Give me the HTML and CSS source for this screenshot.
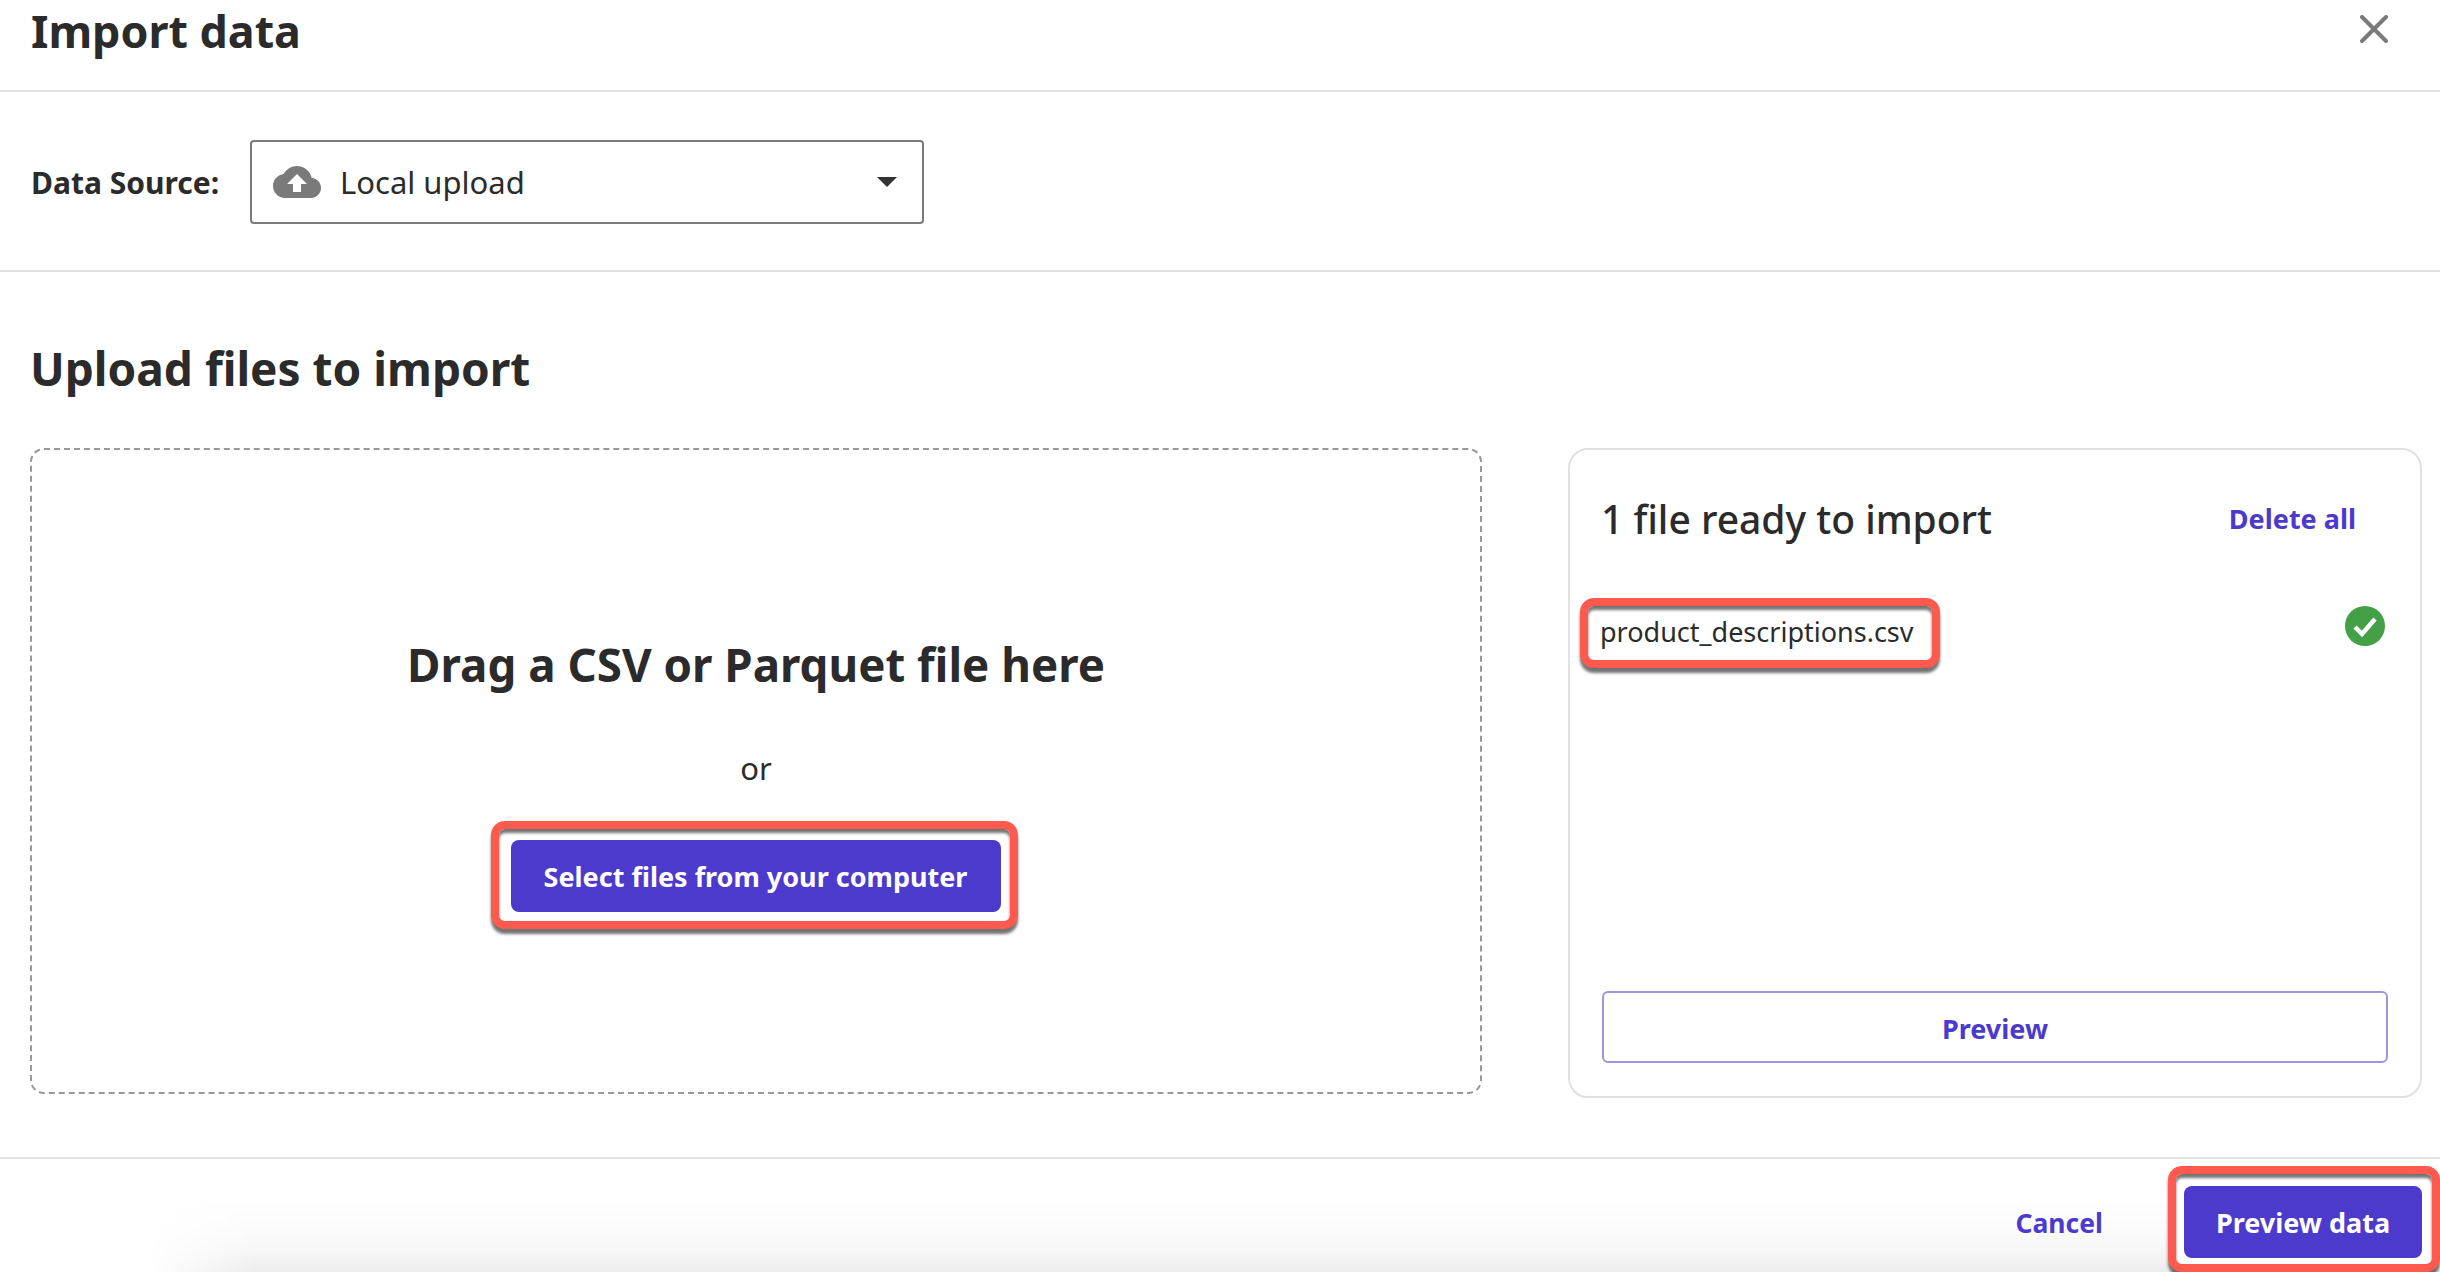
FILE: index.html
```html
<!DOCTYPE html>
<html lang="en">
<head>
    <meta charset="UTF-8">
    <title>Import data</title>
    <link rel="stylesheet" href="styles.css">
</head>
<body>
    <div class="bottom-glow"></div>
    <header class="modal-head">
        <h1>Import data</h1>
        <svg class="close-icon" width="28" height="28" viewBox="0 0 28 28">
            <path d="M2 2 L26 26 M26 2 L2 26" stroke="#7a7a7a" stroke-width="4" stroke-linecap="round" fill="none" />
        </svg>
    </header>

    <section class="source-row">
        <span class="source-label">Data Source:</span>
        <div class="select-box">
            <!-- cloud -->
            <svg class="cloud-icon" width="48" height="32" viewBox="0 4 24 16">
                <path fill="#7a7a7a" d="M19.35 10.04C18.67 6.59 15.64 4 12 4 9.11 4 6.6 5.64 5.35 8.04 2.34 8.36 0 10.91 0 14c0 3.31 2.69 6 6 6h13c2.76 0 5-2.24 5-5 0-2.64-2.05-4.78-4.65-4.96zM14 13v4h-4v-4H7l5-5 5 5h-3z" />
            </svg>
            <span class="select-value">Local upload</span>
            <span class="caret"></span>
        </div>
    </section>

    <main class="upload">
        <h2>Upload files to import</h2>
        <div class="columns">
            <div class="dropzone">
                <div class="drop-title">Drag a CSV or Parquet file here</div>
                <div class="drop-or">or</div>
                <div class="callout callout-select">
                    <button class="btn-primary btn-select">Select files from your computer</button>
                </div>
            </div>
            <div class="file-card">
                <div class="card-head">
                    <span class="card-title">1 file ready to import</span>
                    <a class="link">Delete all</a>
                </div>
                <div class="file-row">
                    <div class="callout callout-file">product_descriptions.csv</div>
                    <svg class="check-icon" width="40" height="40" viewBox="0 0 40 40">
                        <circle cx="20" cy="20" r="20" fill="#43a047" />
                        <path d="M10 21 L17 28 L30 13" stroke="#fff" stroke-width="4.5" fill="none" />
                    </svg>
                </div>
                <button class="btn-outline">Preview</button>
            </div>
        </div>
    </main>

    <footer class="modal-foot">
        <a class="link link-cancel">Cancel</a>
        <div class="callout callout-preview">
            <button class="btn-primary btn-preview">Preview data</button>
        </div>
    </footer>
</body>
</html>
```

FILE: styles.css
```css
* {
    box-sizing: border-box;
}
html, body {
    margin: 0;
    height: 1272px;
    overflow: hidden;
}
body {
    position: relative;
    display: flex;
    flex-direction: column;
    font-family: "Noto Sans", sans-serif;
    color: #2b2b2b;
    background-color: #fff;
}

/* soft shadow rising from the bottom edge of the window */
.bottom-glow {
    position: absolute;
    left: 147px;
    right: 0;
    bottom: 0;
    height: 75px;
    background: linear-gradient(to bottom, rgba(0, 0, 0, 0), rgba(0, 0, 0, 0.01) 40%, rgba(0, 0, 0, 0.03) 70%, rgba(0, 0, 0, 0.07));
    -webkit-mask-image: linear-gradient(to right, transparent, #000 108px);
    mask-image: linear-gradient(to right, transparent, #000 108px);
}

.modal-head {
    flex: none;
    height: 92px;
    padding: 0 52px 0 31px;
    display: flex;
    justify-content: space-between;
    border-bottom: 2px solid #e1e1e1;
}
.modal-head h1 {
    margin: 0;
    font-size: 44.8px;
    font-weight: 700;
    line-height: 62px;
}
.close-icon {
    margin-top: 15px;
}

.source-row {
    flex: none;
    height: 180px;
    padding: 2px 0 0 31px;
    display: flex;
    align-items: center;
    border-bottom: 2px solid #e1e1e1;
}
.source-label {
    width: 219px;
    font-size: 30px;
    font-weight: 700;
}
.select-box {
    width: 674px;
    height: 84px;
    padding: 0 24px 0 21px;
    display: flex;
    align-items: center;
    border: 2px solid #7a7a7a;
    border-radius: 4px;
}
.select-value {
    flex: 1;
    margin-left: 19px;
    font-size: 31px;
}
.caret {
    margin-right: 1px;
    border-left: 10px solid transparent;
    border-right: 10px solid transparent;
    border-top: 10px solid #333;
}

.upload {
    flex: 1;
    padding: 0 18px 0 30px;
}
.upload h2 {
    margin: 0;
    height: 176px;
    padding-top: 64px;
    font-size: 46px;
    font-weight: 700;
    line-height: 64px;
}
.columns {
    display: flex;
    justify-content: space-between;
    align-items: flex-start;
}
.dropzone {
    width: 1452px;
    height: 646px;
    padding-top: 184px;
    display: flex;
    flex-direction: column;
    align-items: center;
    border: 2px dashed #999;
    border-radius: 14px;
}
.drop-title {
    font-size: 45.7px;
    font-weight: 700;
    line-height: 60px;
}
.drop-or {
    margin-top: 54px;
    font-size: 31px;
    line-height: 40px;
}

/* red annotation boxes */
.callout {
    border: 8px solid #ff5a4d;
    border-radius: 14px;
    background-color: #fff;
    box-shadow: 0 5px 3px rgba(0, 0, 0, 0.55), inset 0 4px 3px rgba(0, 0, 0, 0.55);
}
.callout-select {
    margin: 33px 4px 0 0;
    padding: 11px 9px 9px 12px;
}
.callout-preview {
    padding: 12px 10px 6px 8px;
}
.callout-file {
    width: 360px;
    height: 70px;
    padding-left: 12px;
    font-size: 27px;
    line-height: 52px;
}

.btn-primary {
    display: block;
    height: 72px;
    border: none;
    border-radius: 8px;
    background-color: #4c3acd;
    color: #fff;
    font-family: inherit;
    font-size: 27px;
    font-weight: 700;
}
.btn-select {
    width: 490px;
}
.btn-preview {
    width: 238px;
}

.file-card {
    width: 854px;
    height: 650px;
    padding: 0 32px 33px 10px;
    display: flex;
    flex-direction: column;
    border: 2px solid #e1e1e1;
    border-radius: 20px;
}
.card-head {
    height: 148px;
    padding: 41px 32px 0 21px;
    display: flex;
    justify-content: space-between;
    align-items: flex-start;
}
.card-title {
    font-size: 39px;
    font-weight: 500;
    line-height: 56px;
}
.link {
    color: #4c3acd;
    font-size: 27px;
    font-weight: 700;
    line-height: 56px;
}
.file-row {
    flex: 1;
    display: flex;
    justify-content: space-between;
    align-items: flex-start;
}
.check-icon {
    margin: 8px 3px 0 0;
}
.btn-outline {
    height: 72px;
    margin-left: 22px;
    padding-top: 3px;
    border: 2px solid #9e94e2;
    border-radius: 6px;
    background-color: #fff;
    color: #4c3acd;
    font-family: inherit;
    font-size: 27px;
    font-weight: 700;
}

.modal-foot {
    position: relative;
    flex: none;
    height: 115px;
    padding-top: 7px;
    display: flex;
    justify-content: flex-end;
    align-items: flex-start;
    border-top: 2px solid #e1e1e1;
}
.link-cancel {
    margin: 29px 65px 0 0;
    font-size: 26.5px;
}
```
